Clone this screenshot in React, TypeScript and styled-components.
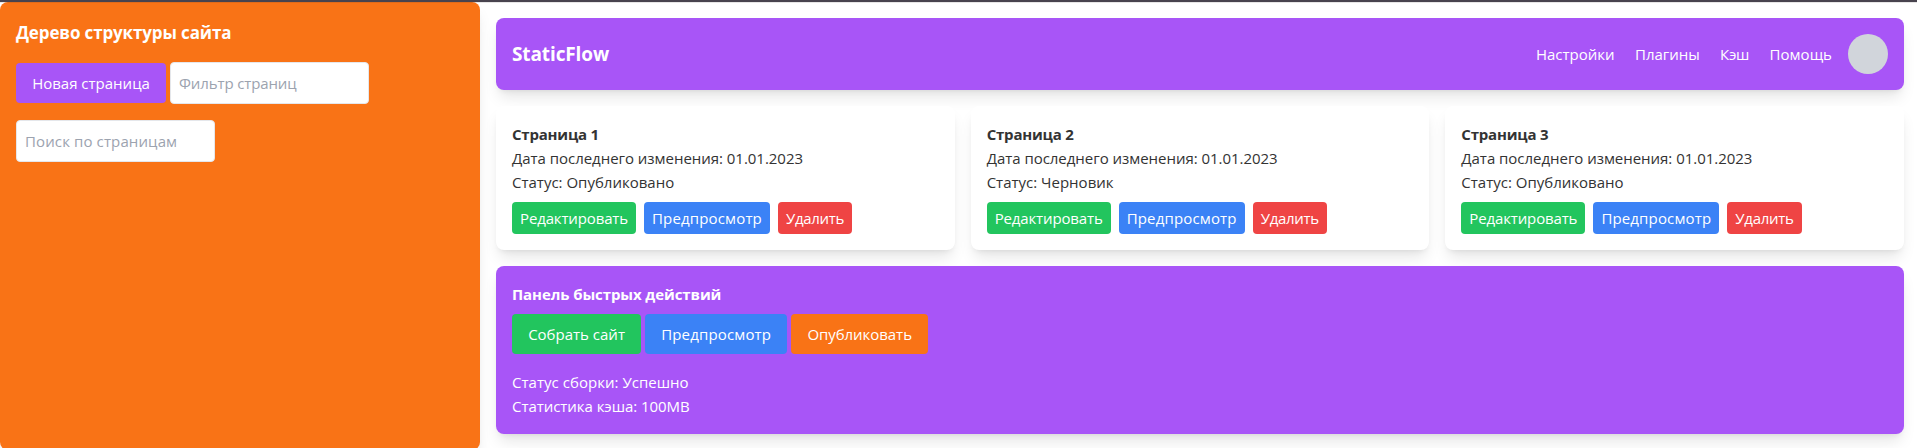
import React from 'react';
import styled, { createGlobalStyle } from 'styled-components';

const colors = {
  purple: '#a855f7',
  orange: '#f97316',
  green: '#22c55e',
  blue: '#3b82f6',
  red: '#ef4444',
};

const GlobalStyle = createGlobalStyle`
  *, *::before, *::after { box-sizing: border-box; }
  html, body { margin: 0; background: #fff; overflow: hidden; }
  body {
    font: 400 15px/24px "Open Sans", "Noto Sans", sans-serif;
    color: #333;
  }
  h1, h2, h3, p { margin: 0; }
  button, input { font: inherit; }
`;

const Viewport = styled.div`
  position: relative;
  height: 448px;
  overflow: hidden;
  border-top: 2px solid #48434e;

  /* soft lower edge of the top bar */
  &::after {
    content: '';
    position: absolute;
    top: 0;
    left: 0;
    right: 0;
    height: 1px;
    background: rgba(60, 50, 50, 0.12);
  }
`;

const Layout = styled.div`
  display: grid;
  grid-template-columns: 480px 1440px;
  width: 1920px;
  height: 448px;
`;

const shadow = '0 10px 15px -3px rgba(0, 0, 0, 0.1), 0 4px 6px -4px rgba(0, 0, 0, 0.1)';

const Sidebar = styled.aside`
  padding: 16px;
  border-radius: 8px;
  background: ${colors.orange};
  color: #fff;
  box-shadow: ${shadow};
`;

const SidebarTitle = styled.h2`
  margin-bottom: 16px;
  padding-top: 1px;
  font-size: 17px;
  line-height: 27px;
  font-weight: 700;
  letter-spacing: -0.13px;
  white-space: nowrap;
`;

const SidebarRow = styled.div`
  display: flex;
  align-items: center;
  gap: 4px;
  margin-bottom: 16px;
`;

const Field = styled.input<{ $spacing: number }>`
  width: 199px;
  height: 42px;
  padding: 8px;
  border: 1px solid #e5e7eb;
  border-radius: 4px;
  background: #fff;
  outline: none;
  letter-spacing: ${(p) => p.$spacing}px;
  &::placeholder { color: #9ca3af; opacity: 1; }
`;

const Main = styled.main`
  display: flex;
  flex-direction: column;
  gap: 16px;
  padding: 16px;
`;

const Header = styled.header`
  display: flex;
  align-items: center;
  justify-content: space-between;
  height: 72px;
  padding: 0 16px;
  border-radius: 8px;
  background: ${colors.purple};
  color: #fff;
  box-shadow: ${shadow};
`;

const Brand = styled.h1`
  font-size: 19px;
  line-height: 28px;
  font-weight: 700;
  letter-spacing: -0.12px;
`;

const HeaderSide = styled.div`
  display: flex;
  align-items: center;
  gap: 16px;
`;

const Nav = styled.nav`
  display: flex;
  gap: 20.4px;
`;

const NavLink = styled.a<{ $spacing: number }>`
  color: inherit;
  text-decoration: none;
  letter-spacing: ${(p) => p.$spacing}px;
`;

const Avatar = styled.div`
  width: 40px;
  height: 40px;
  border-radius: 50%;
  background: #d1d5db;
`;

const CardGrid = styled.div`
  display: grid;
  grid-template-columns: repeat(3, 1fr);
  gap: 16px;
`;

const Card = styled.article`
  height: 144px;
  padding: 16px;
  border-radius: 8px;
  background: #fff;
  box-shadow: ${shadow};
`;

const SectionTitle = styled.h3<{ $spacing: number }>`
  height: 24px;
  font-size: 15px;
  line-height: 24px;
  font-weight: 700;
  letter-spacing: ${(p) => p.$spacing}px;
`;

const Line = styled.p<{ $spacing?: number }>`
  height: 24px;
  white-space: nowrap;
  letter-spacing: ${(p) => p.$spacing ?? 0}px;
`;

const ButtonRow = styled.div<{ $gap: number }>`
  display: flex;
  gap: ${(p) => p.$gap}px;
  margin-top: 8px;
`;

const Button = styled.button<{ $color: string; $width: number; $large?: boolean; $spacing?: number }>`
  flex: none;
  width: ${(p) => p.$width}px;
  height: ${(p) => (p.$large ? 40 : 32)}px;
  padding: 0;
  border: 0;
  border-radius: 4px;
  background: ${(p) => p.$color};
  color: #fff;
  white-space: nowrap;
  letter-spacing: ${(p) => p.$spacing ?? 0}px;
`;

const QuickPanel = styled.section`
  height: 168px;
  padding: 16px;
  border-radius: 8px;
  background: ${colors.purple};
  color: #fff;
  box-shadow: ${shadow};
`;

const BuildInfo = styled.div`
  margin-top: 16px;
`;

const navItems = [
  { label: 'Настройки', spacing: 0 },
  { label: 'Плагины', spacing: -0.03 },
  { label: 'Кэш', spacing: -0.25 },
  { label: 'Помощь', spacing: 0.02 },
];

const pages = [
  { title: 'Страница 1', status: 'Опубликовано' },
  { title: 'Страница 2', status: 'Черновик' },
  { title: 'Страница 3', status: 'Опубликовано' },
];

export default function App() {
  return (
    <Viewport>
      <GlobalStyle />
      <Layout>
        <Sidebar>
          <SidebarTitle>Дерево структуры сайта</SidebarTitle>
          <SidebarRow>
            <Button $color={colors.purple} $width={150} $large>Новая страница</Button>
            <Field placeholder="Фильтр страниц" $spacing={-0.12} />
          </SidebarRow>
          <Field placeholder="Поиск по страницам" $spacing={0.12} />
        </Sidebar>
        <Main>
          <Header>
            <Brand>StaticFlow</Brand>
            <HeaderSide>
              <Nav>
                {navItems.map((item) => (
                  <NavLink key={item.label} $spacing={item.spacing}>{item.label}</NavLink>
                ))}
              </Nav>
              <Avatar />
            </HeaderSide>
          </Header>
          <CardGrid>
            {pages.map((page) => (
              <Card key={page.title}>
                <SectionTitle $spacing={-0.2}>{page.title}</SectionTitle>
                <Line $spacing={-0.03}>Дата последнего изменения: 01.01.2023</Line>
                <Line>Статус: {page.status}</Line>
                <ButtonRow $gap={8}>
                  <Button $color={colors.green} $width={124} $spacing={-0.14}>Редактировать</Button>
                  <Button $color={colors.blue} $width={126} $spacing={0.15}>Предпросмотр</Button>
                  <Button $color={colors.red} $width={74.2} $spacing={-0.3}>Удалить</Button>
                </ButtonRow>
              </Card>
            ))}
          </CardGrid>
          <QuickPanel>
            <SectionTitle $spacing={-0.09}>Панель быстрых действий</SectionTitle>
            <ButtonRow $gap={4.2}>
              <Button $color={colors.green} $width={129.1} $large>Собрать сайт</Button>
              <Button $color={colors.blue} $width={141.8} $large $spacing={0.15}>Предпросмотр</Button>
              <Button $color={colors.orange} $width={136.8} $large $spacing={-0.05}>Опубликовать</Button>
            </ButtonRow>
            <BuildInfo>
              <Line $spacing={0.03}>Статус сборки: Успешно</Line>
              <Line $spacing={-0.05}>Статистика кэша: 100MB</Line>
            </BuildInfo>
          </QuickPanel>
        </Main>
      </Layout>
    </Viewport>
  );
}
